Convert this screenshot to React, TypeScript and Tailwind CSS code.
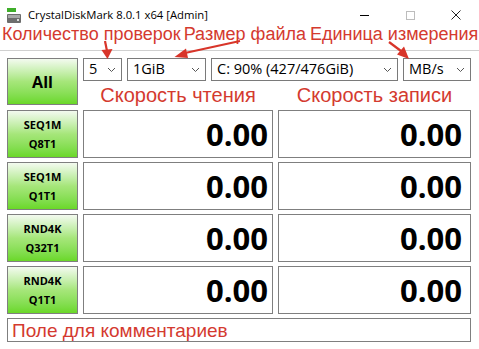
import React from 'react';

const RED = 'text-[#d43a2f]';

const TestButton = ({ top, bottom }: { top: string; bottom: string }) => (
  <button className="w-[71px] h-[48px] flex flex-col items-center justify-center border border-[#7f7f7f] bg-gradient-to-b from-[#f3faef] via-[#a6e67a] to-[#6ad826] font-['Open_Sans',sans-serif] font-bold text-[11px] leading-[19px] text-black">
    <span>{top}</span>
    <span>{bottom}</span>
  </button>
);

const ValueBox = ({ w, pr }: { w: string; pr: string }) => (
  <div className={`${w} ${pr} h-[48px] border border-[#7f7f7f] bg-white flex items-center justify-end font-['Open_Sans',sans-serif] font-bold text-[31px] text-black`}>
    0.00
  </div>
);

const Combo = ({ label, w }: { label: string; w: string }) => (
  <div className={`${w} h-[23px] border border-[#7a7a7a] bg-white flex items-center justify-between pl-[5px] pr-[5px] text-[14.5px] text-black font-['Open_Sans',sans-serif]`}>
    <span className="leading-none">{label}</span>
    <svg width="9" height="6" viewBox="0 0 9 6" className="shrink-0">
      <path d="M1 1 L4.5 4.5 L8 1" stroke="#555" strokeWidth="1" fill="none" />
    </svg>
  </div>
);

const App: React.FC = () => {
  const rows = [
    ['SEQ1M', 'Q8T1'],
    ['SEQ1M', 'Q1T1'],
    ['RND4K', 'Q32T1'],
    ['RND4K', 'Q1T1'],
  ];

  return (
    <div className="relative w-[479px] h-[349px] bg-white overflow-hidden font-['Liberation_Sans',sans-serif]">
      {/* Title bar */}
      <div className="h-[24px] flex items-start pt-[7px] pl-[7px]">
        <svg width="14" height="15" viewBox="0 0 14 15" className="mr-[7px] mt-[1px]">
          <rect x="0" y="0" width="9" height="4" fill="#3fae2a" />
          <rect x="0" y="6" width="14" height="9" rx="1" fill="#6d6d6d" />
          <rect x="1" y="7" width="12" height="3" fill="#a8a8a8" />
          <rect x="10" y="11" width="2" height="2" fill="#ddd" />
        </svg>
        <span className="font-['Open_Sans',sans-serif] text-[11.3px] leading-[16px] text-black">CrystalDiskMark 8.0.1 x64 [Admin]</span>
        <div className="ml-auto flex items-center h-[16px]">
          <div className="w-[46px] flex justify-center">
            <div className="w-[9px] h-px bg-black" />
          </div>
          <div className="w-[46px] flex justify-center">
            <div className="w-[9px] h-[9px] border border-[#bdbdbd]" />
          </div>
          <div className="w-[46px] flex justify-center">
            <svg width="10" height="10" viewBox="0 0 10 10">
              <path d="M0.5 0.5 L9.5 9.5 M9.5 0.5 L0.5 9.5" stroke="#222" strokeWidth="1" />
            </svg>
          </div>
        </div>
      </div>

      {/* Annotation labels */}
      <div className={`h-[26px] flex items-start pl-[2px] text-[18px] leading-[20px] ${RED}`}>
        <span>Количество проверок</span>
        <span className="ml-[3px]">Размер файла</span>
        <span className="ml-[4px]">Единица измерения</span>
      </div>

      <div className="border-b border-[#d0d0d0] h-0" />

      {/* Main */}
      <div className="px-[7px] pt-[7px] flex flex-col gap-[4px]">
        <div className="flex gap-[5px] mb-[1px]">
          <button className="w-[71px] h-[47px] border border-[#7f7f7f] bg-gradient-to-b from-[#f3faef] via-[#a6e67a] to-[#6ad826] font-['Open_Sans',sans-serif] font-bold text-[16px] text-black">
            All
          </button>
          <div className="flex flex-col">
            <div className="flex gap-[5px]">
              <Combo label="5" w="w-[39px]" />
              <Combo label="1GiB" w="w-[79px]" />
              <Combo label="C: 90% (427/476GiB)" w="w-[187px]" />
              <Combo label="MB/s" w="w-[68px]" />
            </div>
            <div className={`flex gap-[5px] h-[24px] items-center text-[20px] leading-none ${RED}`}>
              <div className="w-[190px] text-center pt-[4px]">Скорость чтения</div>
              <div className="w-[193px] text-center pt-[4px]">Скорость записи</div>
            </div>
          </div>
        </div>

        {rows.map(([a, b], i) => (
          <div key={i} className="flex gap-[5px]">
            <TestButton top={a} bottom={b} />
            <ValueBox w="w-[190px]" pr="pr-[4px]" />
            <ValueBox w="w-[193px]" pr="pr-[8px]" />
          </div>
        ))}

        <div className={`w-[464px] h-[24px] border border-[#7f7f7f] flex items-center pl-[4px] text-[19px] leading-none ${RED}`}>
          Поле для комментариев
        </div>
      </div>

      {/* Annotation arrows */}
      <svg className="absolute left-0 top-0 pointer-events-none" width="479" height="349">
        <g stroke="#d8352a" strokeWidth="2.2" fill="#d8352a">
          <line x1="105" y1="41" x2="107" y2="51" />
          <path d="M101.5 50 L112.5 49 L107.5 59 Z" stroke="none" />
          <line x1="240" y1="41" x2="185" y2="53" />
          <path d="M186 48.5 L188 58 L174.5 57 Z" stroke="none" />
          <line x1="389" y1="42" x2="401" y2="51" />
          <path d="M397 54.5 L404 46.5 L409 59 Z" stroke="none" />
        </g>
      </svg>
    </div>
  );
};

export default App;
